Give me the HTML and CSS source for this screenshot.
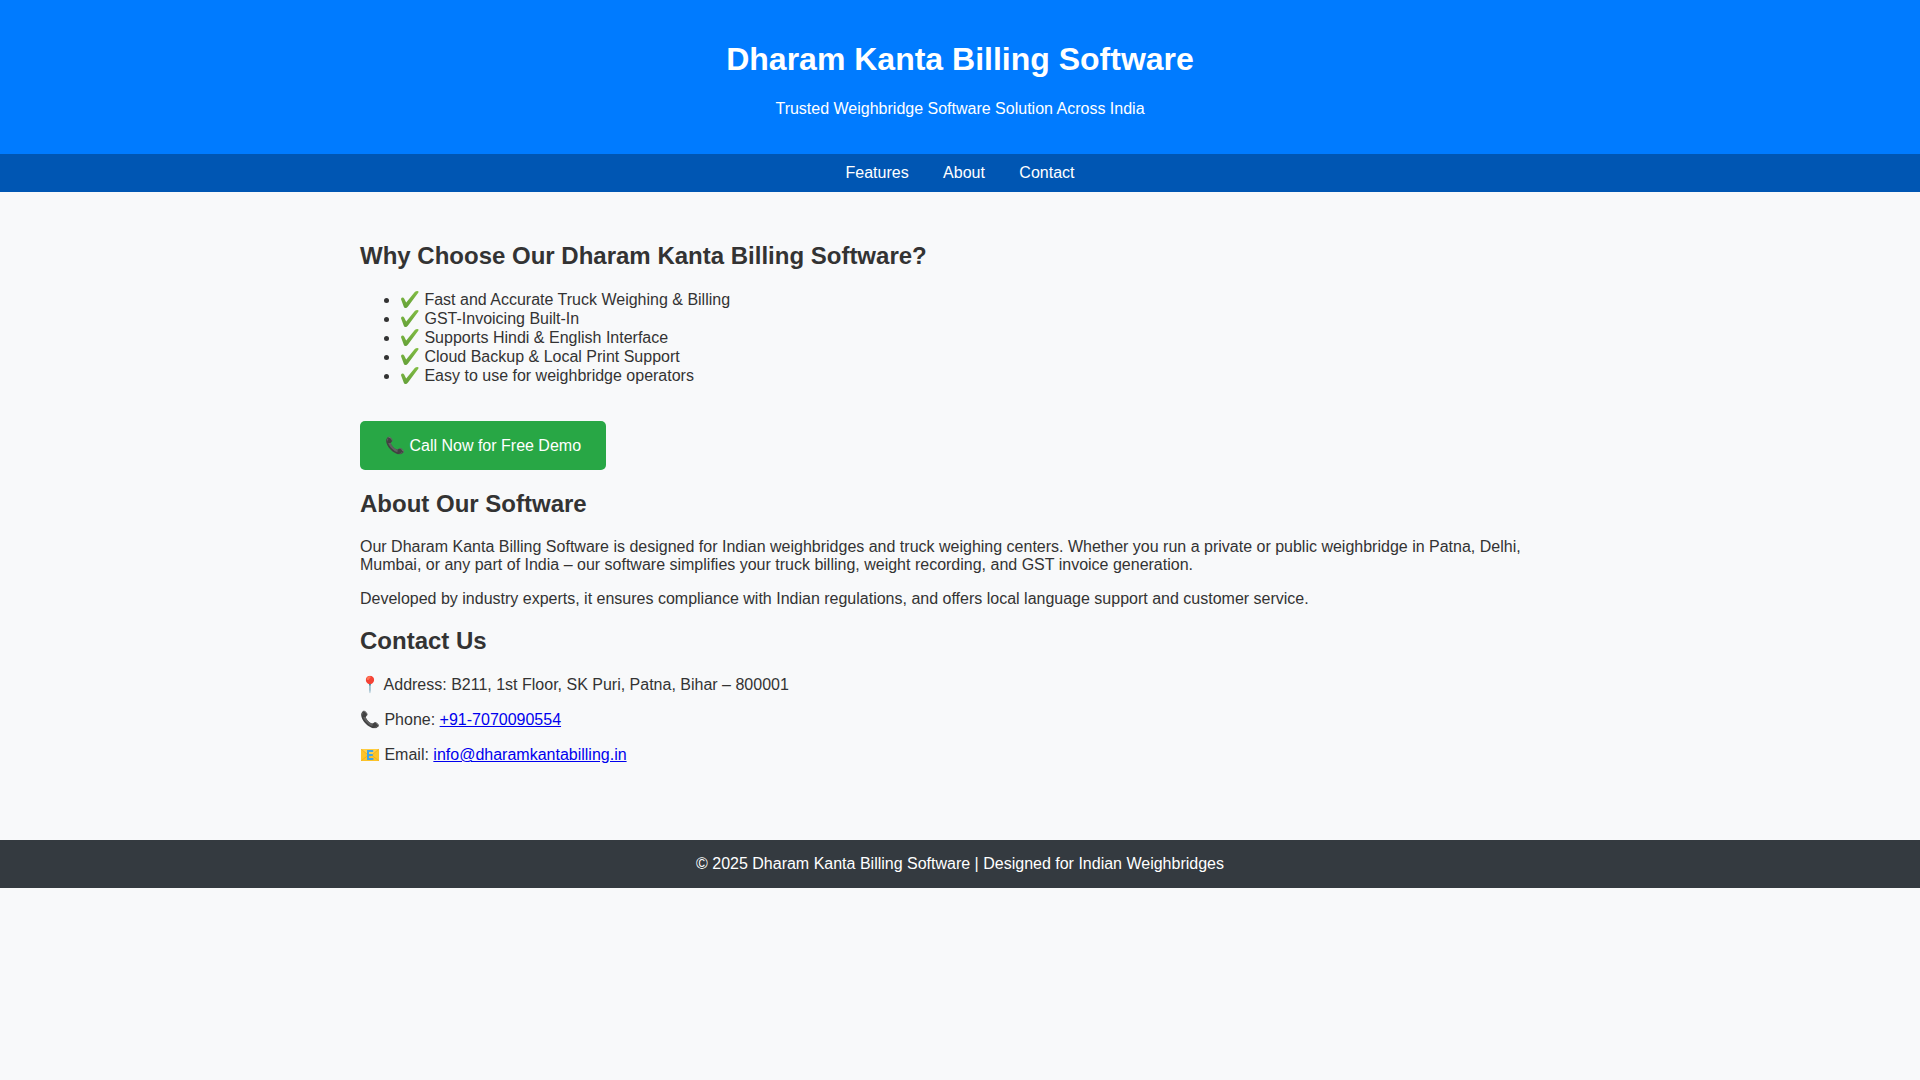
FILE: index.html
```html
<!DOCTYPE html>
<html lang="en">
<head>
  <meta charset="UTF-8">
  <meta name="viewport" content="width=device-width, initial-scale=1.0">
  <title>Dharam Kanta Billing Software</title>
  <link rel="stylesheet" href="styles.css">
</head>
<body>

  <!-- Shared icons -->
  <svg class="sprite" aria-hidden="true">
    <linearGradient id="green" x1="0" y1="0" x2="0" y2="1">
      <stop offset="0" stop-color="#82bd44"/>
      <stop offset="1" stop-color="#64a038"/>
    </linearGradient>
    <symbol id="check" viewBox="0 0 20 19">
      <path d="M1 9.2Q1 7.6 2.4 7.5Q3.6 7.4 4.3 8.8L6.2 12.4L14.8 2Q15.8 .9 17.6 .9Q19.1 1 18.4 2.4L8 16.4Q6.8 18.2 5.3 18.1Q4.3 18 3.8 16.7Z" fill="url(#green)"/>
    </symbol>
    <symbol id="mail" viewBox="0 0 20 19">
      <rect x="1" y="4" width="18" height="12" rx=".5" fill="#fcc42a"/>
      <path d="M1.3 15.6L8 10.5M18.7 15.6L12 10.5" stroke="#eda91d" stroke-width=".8"/>
      <path d="M1.3 4.3L10 11.5L18.7 4.3" fill="#ffd14a" stroke="#eda91d" stroke-width=".8"/>
      <path d="M13.2 6H8v8h5.4M8 10h4.8" fill="none" stroke="#40a4e4" stroke-width="2"/>
    </symbol>
  </svg>

  <header>
    <h1>Dharam Kanta Billing Software</h1>
    <p>Trusted Weighbridge Software Solution Across India</p>
  </header>

  <nav>
    <a href="#features">Features</a>
    <a href="#about">About</a>
    <a href="#contact">Contact</a>
  </nav>

  <div class="container">
    <section id="features">
      <h2>Why Choose Our Dharam Kanta Billing Software?</h2>
      <ul>
        <li><svg class="icon"><use href="#check"/></svg> Fast and Accurate Truck Weighing &amp; Billing</li>
        <li><svg class="icon"><use href="#check"/></svg> GST-Invoicing Built-In</li>
        <li><svg class="icon"><use href="#check"/></svg> Supports Hindi &amp; English Interface</li>
        <li><svg class="icon"><use href="#check"/></svg> Cloud Backup &amp; Local Print Support</li>
        <li><svg class="icon"><use href="#check"/></svg> Easy to use for weighbridge operators</li>
      </ul>
      <a href="tel:+917070090554" class="cta">📞 Call Now for Free Demo</a>
    </section>

    <section id="about">
      <h2>About Our Software</h2>
      <p>Our Dharam Kanta Billing Software is designed for Indian weighbridges and truck weighing centers. Whether you run a private or public weighbridge in Patna, Delhi, Mumbai, or any part of India – our software simplifies your truck billing, weight recording, and GST invoice generation.</p>
      <p>Developed by industry experts, it ensures compliance with Indian regulations, and offers local language support and customer service.</p>
    </section>

    <section id="contact">
      <h2>Contact Us</h2>
      <p>📍 Address: B211, 1st Floor, SK Puri, Patna, Bihar – 800001</p>
      <p>📞 Phone: <a href="tel:+917070090554">+91-7070090554</a></p>
      <p><svg class="icon"><use href="#mail"/></svg> Email: <a href="mailto:info@dharamkantabilling.in">info@dharamkantabilling.in</a></p>
    </section>
  </div>

  <footer>
    © 2025 Dharam Kanta Billing Software | Designed for Indian Weighbridges
  </footer>

</body>
</html>
```

FILE: styles.css
```css
body {
  font-family: 'Liberation Sans', Arial, sans-serif;
  margin: 0;
  padding: 0;
  background: #f8f9fa;
  color: #333;
}

header {
  background: #007bff;
  color: white;
  padding: 20px;
  text-align: center;
}

nav {
  background: #0056b3;
  padding: 10px;
  text-align: center;
}

nav a {
  color: white;
  margin: 0 15px;
  text-decoration: none;
}

.container {
  max-width: 1200px;
  margin: auto;
  padding: 30px;
}

.cta {
  display: inline-block;
  background: #28a745;
  color: white;
  padding: 15px 25px;
  margin-top: 20px;
  border-radius: 5px;
  text-decoration: none;
}

.sprite {
  position: absolute;
  width: 0;
  height: 0;
}

.icon {
  width: 20px;
  height: 19px;
  vertical-align: -4px;
}

footer {
  background: #343a40;
  color: white;
  padding: 15px;
  margin-top: 30px;
  text-align: center;
}
```
